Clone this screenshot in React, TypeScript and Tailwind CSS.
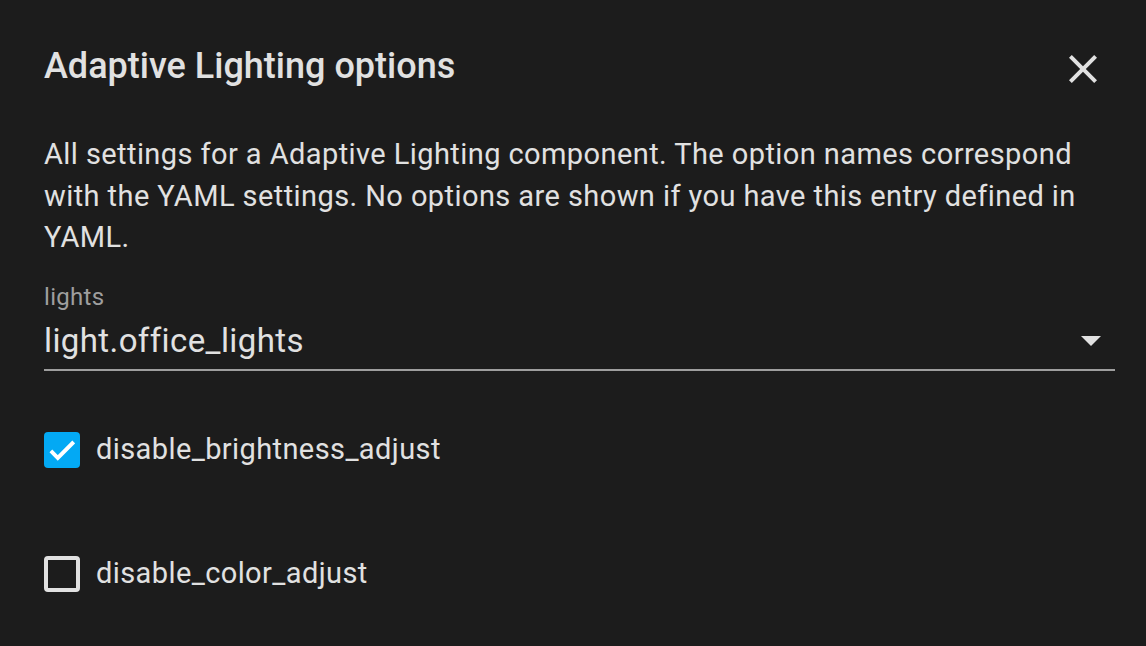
import React from "react";

function CloseIcon() {
  return (
    <svg viewBox="0 0 24 24" className="w-12 h-12 mt-px fill-[#e1e1e1]">
      <path d="M19,6.41L17.59,5L12,10.59L6.41,5L5,6.41L10.59,12L5,17.59L6.41,19L12,13.41L17.59,19L19,17.59L13.41,12L19,6.41Z" />
    </svg>
  );
}

function Checkbox({ checked, label }: { checked: boolean; label: string }) {
  return (
    <div className="flex items-center h-[62px]">
      {checked ? (
        <div className="w-9 h-9 rounded-[4px] bg-[#03a9f4] p-[5px]">
          <svg viewBox="0 0 24 24" className="w-full h-full">
            <path d="M1.73,12.91 8.1,19.28 22.79,4.59" fill="none" stroke="#fff" strokeWidth="3.6" />
          </svg>
        </div>
      ) : (
        <div className="w-9 h-9 rounded-[4px] border-4 border-[#e1e1e1]" />
      )}
      <span className="ml-4 text-[29px] tracking-[0.4px] text-[#e1e1e1]">{label}</span>
    </div>
  );
}

export default function App() {
  return (
    <div className="w-[1146px] h-[646px] bg-[#1c1c1c] overflow-hidden font-['Roboto',sans-serif] text-[#e1e1e1]">
      <div className="flex items-start justify-between pl-11 pr-[39px] pt-[44px]">
        <h2 className="text-[36px] font-medium leading-[44px]">Adaptive Lighting options</h2>
        <CloseIcon />
      </div>
      <div className="pl-11 pr-[31px] mt-[41px]">
        <p className="text-[29px] leading-[41.5px] tracking-[0.42px]">
          All settings for a Adaptive Lighting component. The option names correspond with the YAML settings. No options are shown if you have this entry defined in YAML.
        </p>
        <div className="mt-[24px] border-b-2 border-[#9e9e9e]">
          <div className="text-[24px] leading-[28px] tracking-[0.3px] text-[#9e9e9e]">lights</div>
          <div className="flex items-center justify-between mt-2 pb-[6px]">
            <span className="text-[33px] leading-[44px] tracking-[0.4px]">light.office_lights</span>
            <svg viewBox="0 0 20 10" className="w-5 h-[10px] mr-[14px] fill-[#e1e1e1]">
              <path d="M0 0h20L10 10z" />
            </svg>
          </div>
        </div>
        <div className="mt-[48px] flex flex-col gap-[62px]">
          <Checkbox checked label="disable_brightness_adjust" />
          <Checkbox checked={false} label="disable_color_adjust" />
        </div>
      </div>
    </div>
  );
}
